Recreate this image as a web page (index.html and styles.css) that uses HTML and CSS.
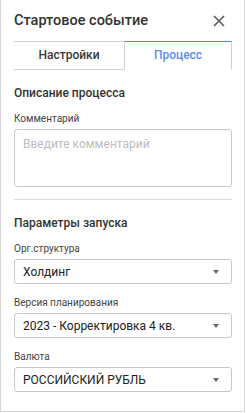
FILE: index.html
```html
<!DOCTYPE html>
<html lang="ru">
<head>
    <meta charset="UTF-8">
    <meta name="viewport" content="width=device-width, initial-scale=1.0">
    <title>Стартовое событие</title>
    <link rel="stylesheet" href="styles.css">
</head>
<body>

    <div class="panel">
        <!-- Header -->
        <div class="panel-header">
            <h2>Стартовое событие</h2>
            <button class="close-btn" aria-label="Закрыть">
                <svg width="12" height="12" viewBox="0 0 12 12">
                    <path d="M1 1 L11 11 M11 1 L1 11" stroke="#5a5a5a" stroke-width="1.6" fill="none"/>
                </svg>
            </button>
        </div>

        <!-- Tabs -->
        <div class="tabs">
            <div class="tab">Настройки</div>
            <div class="tab active">Процесс</div>
        </div>

        <!-- Process description -->
        <h3 class="section-title">Описание процесса</h3>
        <label class="field-label">Комментарий</label>
        <textarea class="comment" placeholder="Введите комментарий"></textarea>

        <div class="divider"></div>

        <!-- Launch params -->
        <h3 class="section-title">Параметры запуска</h3>

        <label class="field-label">Орг.структура</label>
        <div class="select">
            <span>Холдинг</span>
            <span class="arrow"></span>
        </div>

        <label class="field-label">Версия планирования</label>
        <div class="select">
            <span>2023 - Корректировка 4 кв.</span>
            <span class="arrow"></span>
        </div>

        <label class="field-label">Валюта</label>
        <div class="select">
            <span>РОССИЙСКИЙ РУБЛЬ</span>
            <span class="arrow"></span>
        </div>
    </div>

</body>
</html>
```

FILE: styles.css
```css
/* General Styles */
body {
    margin: 0;
    padding: 0;
    font-family: Roboto, "Liberation Sans", sans-serif;
    background-color: #fff;
    color: #333;
}

.panel {
    width: 245px;
    height: 412px;
    box-sizing: border-box;
    border: 1px solid #d4d4d4;
    border-top: none;
    padding: 0 12px 0 13px;
    background-color: #fff;
}

/* Header */
.panel-header {
    display: flex;
    justify-content: space-between;
    align-items: center;
    padding-top: 11px;
}

.panel-header h2 {
    margin: 0;
    font-size: 14.5px;
    line-height: 20px;
    font-weight: 500;
    color: #333;
}

.close-btn {
    background: none;
    border: none;
    padding: 0;
    margin-right: 7px;
    width: 12px;
    height: 12px;
    display: flex;
    cursor: pointer;
}

/* Tabs */
.tabs {
    display: flex;
    margin-top: 10px;
}

.tab {
    flex: 1;
    height: 27px;
    line-height: 27px;
    text-align: center;
    font-size: 12px;
    font-weight: 500;
    color: #3a3a3a;
    border-top: 1px solid #d0d0d0;
    border-bottom: 1px solid #d0d0d0;
    border-right: 1px solid #d0d0d0;
}

.tab:first-child {
    flex: 0 0 110px;
}

.tab.active {
    color: #5b8def;
    border-top: 1px solid #3f8cf3;
    border-bottom-color: transparent;
}

/* Sections */
.section-title {
    margin: 15px 0 0;
    font-size: 12px;
    line-height: 16px;
    font-weight: 500;
    color: #333;
}

.field-label {
    display: block;
    margin-top: 10px;
    font-size: 10px;
    line-height: 14px;
    color: #444;
}

.comment {
    display: block;
    width: 100%;
    height: 58px;
    box-sizing: border-box;
    margin-top: 3px;
    padding: 6px 8px;
    border: 1px solid #c8c8c8;
    border-radius: 3px;
    font-family: inherit;
    font-size: 12px;
    line-height: 16px;
    resize: none;
}

.comment::placeholder {
    color: #bdbdbd;
}

.divider {
    height: 1px;
    background-color: #dcdcdc;
    margin-top: 12px;
}

.section-title + .field-label {
    margin-top: 11px;
}

.select + .field-label {
    margin-top: 12px;
}

.select {
    display: flex;
    justify-content: space-between;
    align-items: center;
    height: 25px;
    box-sizing: border-box;
    margin-top: 3px;
    padding: 0 12px 0 8px;
    border: 1px solid #c8c8c8;
    border-radius: 3px;
    font-size: 12px;
    color: #222;
}

.arrow {
    width: 0;
    height: 0;
    border-left: 3px solid transparent;
    border-right: 3px solid transparent;
    border-top: 4px solid #666;
}
```
